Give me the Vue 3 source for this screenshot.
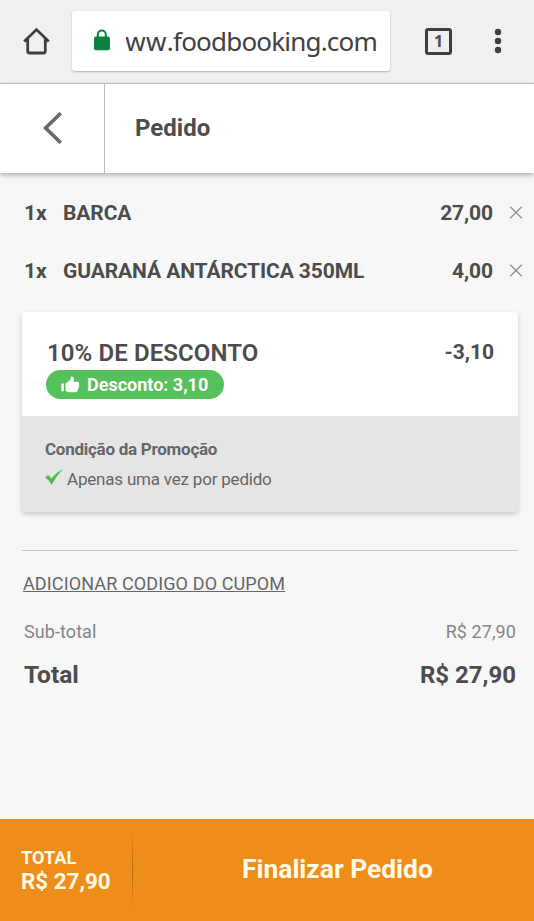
<script setup>
const items = [
  { qty: '1x', name: 'BARCA', price: '27,00' },
  { qty: '1x', name: 'GUARANÁ ANTÁRCTICA 350ML', price: '4,00' },
]
</script>

<template>
  <div class="screen">
    <div class="browser">
      <svg class="home" width="28" height="28" viewBox="0 0 28 28">
        <path d="M2.200 14.500 14.500 2.600 26.800 14.500M5.700 12V24q0 2 2 2H21.300q2 0 2-2V12" fill="none" stroke="#3e403f" stroke-width="2.800" />
      </svg>
      <div class="address">
        <svg class="lock" width="18" height="22" viewBox="0 0 18 22">
          <path d="M4.800 9V5.500a4 4 0 0 1 8 0V9" fill="none" stroke="#0b8043" stroke-width="2" />
          <rect x="1" y="7.500" width="16" height="13.800" rx="2" fill="#0b8043" />
        </svg>
        <div class="url"><span><span class="www">www</span>.foodbooking.com</span></div>
      </div>
      <div class="tabs">1</div>
      <svg class="menu" width="8" height="26" viewBox="0 0 8 26">
        <g fill="#3e403f"><circle cx="4" cy="4" r="3.200" /><circle cx="4" cy="13" r="3.200" /><circle cx="4" cy="22" r="3.200" /></g>
      </svg>
    </div>

    <header class="header">
      <div class="back">
        <svg width="20" height="32" viewBox="0 0 20 32">
          <path d="M18.800 1.200 3.600 16 18.800 30.800" fill="none" stroke="#696969" stroke-width="3.600" />
        </svg>
      </div>
      <h1>Pedido</h1>
    </header>

    <main>
      <div v-for="item in items" :key="item.name" class="item">
        <span class="qty">{{ item.qty }}</span>
        <span class="name">{{ item.name }}</span>
        <span class="price">{{ item.price }}</span>
        <svg width="14" height="14" viewBox="0 0 14 14">
          <path d="M1.200.7 12.800 12.300M12.800.7 1.200 12.300" stroke="#949494" stroke-width="1.500" />
        </svg>
      </div>

      <section class="promo">
        <div class="promo-top">
          <div class="promo-line">
            <h2>10% DE DESCONTO</h2>
            <span class="minus">-3,10</span>
          </div>
          <div class="badge">
            <svg width="19" height="18" viewBox="0 0 19 18">
              <path d="M.3 7.500H2.900V15.300H.3ZM4.500 7.500 8.900 4.200 10.200.5Q13.300.2 12.900 4.200L12.300 5.800H17Q18.700 6.500 18 8.700 18.600 10.400 17.500 11.500 17.800 13.100 16.700 13.900 16.700 15.900 14.700 16.300H8.500Q6.200 16 4.500 15Z" fill="#fff" />
            </svg>
            <span>Desconto: 3,10</span>
          </div>
        </div>
        <div class="promo-bottom">
          <h3>Condição da Promoção</h3>
          <div class="condition">
            <svg width="19" height="17" viewBox="0 0 19 17">
              <path d="M.1 9.200 3.200 7 6.400 10.600Q11 4.200 18.300 1.200 11.700 7 6.700 16.700Q4.200 12.400.1 9.200Z" fill="#4fbb54" />
            </svg>
            <span>Apenas uma vez por pedido</span>
          </div>
        </div>
      </section>

      <hr />
      <div class="coupon"><a>ADICIONAR CODIGO DO CUPOM</a></div>
      <div class="row subtotal"><span class="label">Sub-total</span><span class="amount">R$ 27,90</span></div>
      <div class="row total"><span class="label">Total</span><span class="amount">R$ 27,90</span></div>
    </main>

    <footer>
      <div class="sum">
        <span class="sum-label">TOTAL</span>
        <span class="sum-value">R$ 27,90</span>
      </div>
      <div class="divider"></div>
      <div class="finish"><span>Finalizar Pedido</span></div>
    </footer>
  </div>
</template>

<style>
body { margin: 0; background: #f7f7f7; }
</style>

<style scoped>
* { box-sizing: border-box; }
h1, h2, h3 { margin: 0; }
svg { display: block; flex: none; }
.screen {
  width: 534px; height: 921px; display: flex; flex-direction: column;
  background: #f7f7f7; color: #4c4c4c; font-family: Roboto, sans-serif;
  white-space: nowrap; overflow: hidden;
}
.browser {
  height: 84px; flex: none; display: flex; align-items: flex-start;
  background: #f0f0f0; border-bottom: 1px solid #c3c3c3;
}
.home { margin: 27px 0 0 22px; }
.address {
  width: 318px; height: 60px; margin: 11px 0 0 22px; padding: 0 13px 0 21px;
  display: flex; align-items: center; background: #fff; border-radius: 3px;
  box-shadow: 0 1px 2px rgba(0, 0, 0, .28);
}
.lock { margin: -3px 0 0; }
.url {
  flex: 1; min-width: 0; margin: -1px 0 0 15px; overflow: hidden;
  display: flex; justify-content: flex-end;
  font: 26px/36px "Noto Sans", sans-serif; letter-spacing: -.8px; color: #414141;
}
.www { letter-spacing: .3px; }
.tabs {
  width: 27px; height: 27px; margin: 28px 0 0 35px; border: 3px solid #3e403f;
  border-radius: 3px; text-align: center; font: 700 16px/20px "Noto Sans", sans-serif; color: #4c4c4c;
}
.menu { margin: 28px 0 0 42px; }
.header {
  height: 89px; flex: none; display: flex; background: #fff;
  box-shadow: 0 2px 5px rgba(0, 0, 0, .3); position: relative;
}
.back {
  width: 105px; padding: 28px 0 0 42px; border-right: 1px solid #bcbcbc;
}
h1 { padding: 29px 0 0 30px; font-size: 24px; line-height: 30px; font-weight: 700; }
main { flex: 1; padding-top: 11px; }
.item {
  height: 58px; padding: 0 11px 0 24px; display: flex; align-items: center;
  font-size: 21px; font-weight: 700; letter-spacing: -.1px;
}
.qty { width: 39px; }
.name { flex: 1; }
.item svg { margin-left: 16px; }
.promo {
  width: 496px; height: 200px; margin: 12px 0 0 22px; border-radius: 4px;
  overflow: hidden; box-shadow: 0 2px 5px rgba(0, 0, 0, .2);
}
.promo-top { height: 104px; padding: 26px 24px 0; background: #fff; }
.promo-line { height: 32px; display: flex; justify-content: space-between; line-height: 30px; }
h2 { padding-left: 1px; font-size: 24px; font-weight: 600; letter-spacing: .1px; }
.minus { font-size: 21px; font-weight: 700; line-height: 28px; }
.badge {
  width: 178px; height: 29px; padding-left: 15px; display: flex; align-items: center; gap: 7px;
  border-radius: 15px; background: #56c05b; color: #fff; font-size: 18px; font-weight: 700;
}
.promo-bottom { height: 96px; padding: 22px 23px; background: #e5e5e5; color: #666; }
h3 { font-size: 17px; line-height: 22px; font-weight: 700; letter-spacing: -.26px; }
.condition { margin-top: 8px; display: flex; gap: 3px; font-size: 17px; line-height: 22px; letter-spacing: -.2px; }
hr { width: 496px; height: 1px; margin: 38px 0 0 22px; border: 0; background: #c6c6c6; }
.coupon { padding: 21px 0 0 23px; font-size: 18px; line-height: 24px; letter-spacing: .12px; color: #666; }
.coupon a { text-decoration: underline; }
.row { display: flex; justify-content: space-between; padding: 0 18px 0 24px; }
.subtotal { margin-top: 24px; font-size: 18px; line-height: 24px; letter-spacing: .08px; color: #858585; }
.total { margin-top: 16px; font-size: 24px; line-height: 30px; font-weight: 700; }
.total .label { font-size: 24.500px; }
footer {
  height: 102px; flex: none; display: flex; color: #fffbe6;
  background: linear-gradient(#e58d24, #ef8d1a 8px);
}
.sum { width: 132px; padding: 28px 0 0 21px; display: flex; flex-direction: column; font-weight: 700; }
.sum-label { font-size: 18.200px; line-height: 22px; }
.sum-value { font-size: 22.400px; line-height: 24px; }
.divider {
  width: 1px; height: 82px; margin-top: 10px;
  background: linear-gradient(transparent, #b8680c 50%, transparent);
}
.finish { padding: 34px 0 0 109px; font-size: 26.400px; line-height: 32px; font-weight: 700; }
</style>
